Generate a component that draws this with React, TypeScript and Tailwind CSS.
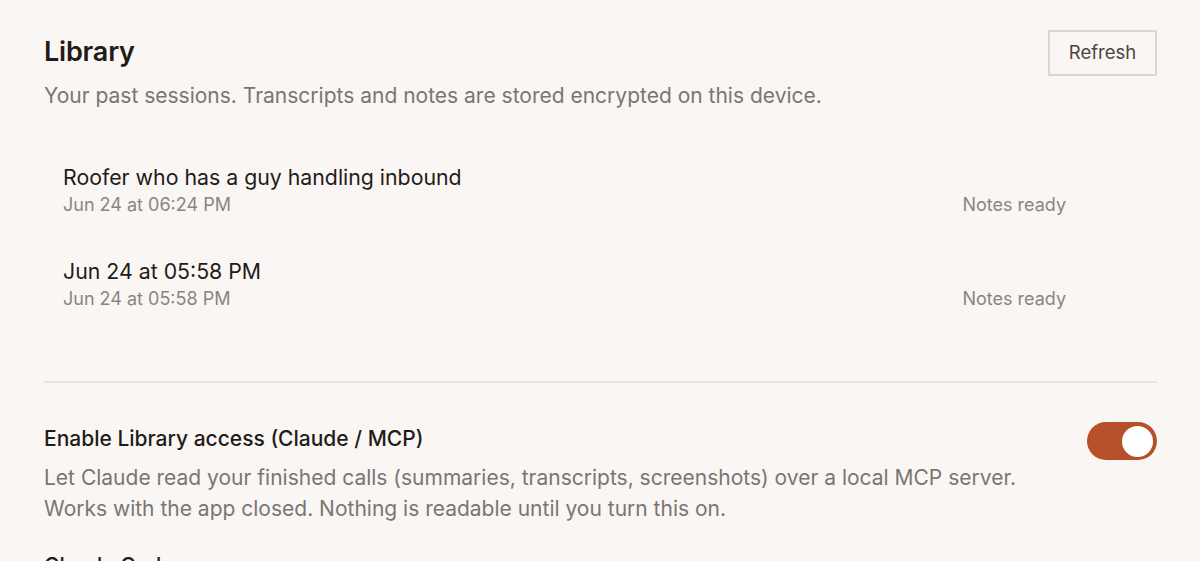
import React from "react"

const sessions = [
  { title: "Roofer who has a guy handling inbound", date: "Jun 24 at 06:24 PM", status: "Notes ready" },
  { title: "Jun 24 at 05:58 PM", date: "Jun 24 at 05:58 PM", status: "Notes ready" },
]

export default function App() {
  return (
    <div
      className="min-h-screen bg-[#faf6f3] text-[#1f1c1a] overflow-hidden"
      style={{ fontFamily: "Inter, 'Noto Sans', sans-serif" }}
    >
      <div className="pl-[44px] pr-[43px] pt-[30px]">
        {/* Header */}
        <div className="flex items-start justify-between">
          <div>
            <h1 className="text-[27px] leading-[44px] font-semibold tracking-[-0.2px]">Library</h1>
            <p className="mt-[8px] text-[21px] leading-[28px] text-[#7a7573]">
              Your past sessions. Transcripts and notes are stored encrypted on this device.
            </p>
          </div>
          <button className="h-[46px] w-[109px] border-2 border-[#dcd6d2] text-[18.5px] text-[#4a4644] bg-[#faf6f3]">
            Refresh
          </button>
        </div>

        {/* Sessions */}
        <div className="mt-[53px] flex flex-col gap-[40px] pl-[19px] pr-[91px]">
          {sessions.map((s, i) => (
            <div key={i} className="flex items-end justify-between">
              <div>
                <div className="text-[21.3px] leading-[28px]">{s.title}</div>
                <div className="mt-[2px] text-[18px] leading-[24px] text-[#8a8583]">{s.date}</div>
              </div>
              <div className="text-[18px] leading-[24px] text-[#8a8583]">{s.status}</div>
            </div>
          ))}
        </div>

        <div className="mt-[70px] h-[2px] bg-[#e8e3df]" />

        {/* MCP access */}
        <div className="mt-[42px] flex items-start justify-between">
          <div>
            <div className="text-[21px] leading-[28px] font-medium">Enable Library access (Claude / MCP)</div>
            <p className="mt-[9px] text-[21px] leading-[31px] text-[#7a7573]">
              Let Claude read your finished calls (summaries, transcripts, screenshots) over a local MCP server.
              <br />
              Works with the app closed. Nothing is readable until you turn this on.
            </p>
          </div>
          <div className="mt-[-3px] flex h-[38px] w-[70px] items-center justify-end rounded-full bg-[#b5502a] px-[4px]">
            <div className="h-[31px] w-[31px] rounded-full bg-white" />
          </div>
        </div>

        <div className="mt-[28px] text-[21px] leading-[28px] font-medium">Claude Code</div>
      </div>
    </div>
  )
}
